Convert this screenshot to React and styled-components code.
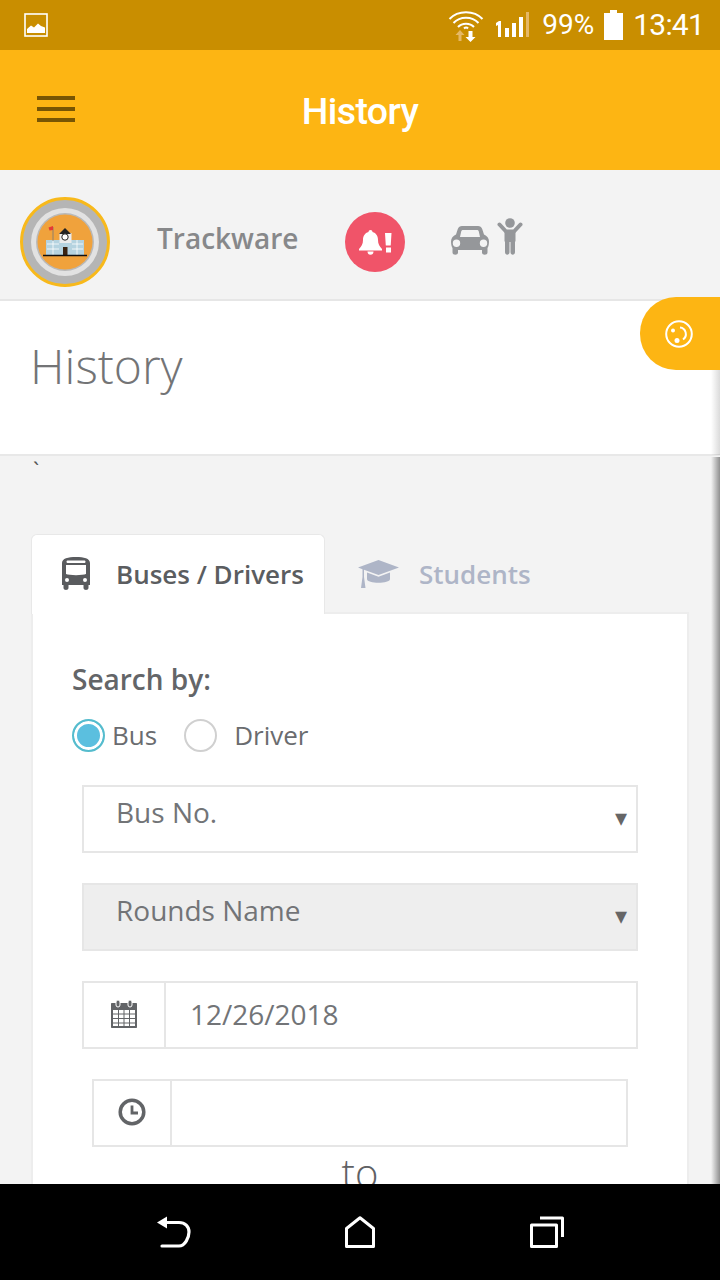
import React from 'react';
import styled, { createGlobalStyle } from 'styled-components';

const Global = createGlobalStyle`
  html, body { margin: 0; padding: 0; background: #000; }
  * { box-sizing: border-box; }
`;

const Screen = styled.div`
  width: 720px;
  height: 1280px;
  display: flex;
  flex-direction: column;
  overflow: hidden;
  position: relative;
  font-family: "Open Sans", sans-serif;
  background: #f3f3f3;
`;

const StatusBar = styled.div`
  height: 50px;
  flex: none;
  background: #c98e00;
  display: flex;
  align-items: center;
  padding: 0 16px 0 24px;
  color: #fff;
  font-family: Roboto, sans-serif;
`;

const StatusRight = styled.div`
  margin-left: auto;
  display: flex;
  align-items: center;
`;

const StatusSpacer = styled.span`
  width: ${p => p.$w}px;
`;

const StatusText = styled.span`
  font-size: ${p => p.$size}px;
  margin-left: ${p => p.$gap}px;
  letter-spacing: ${p => p.$spacing || 0}px;
  line-height: 50px;
`;

const AppBar = styled.div`
  height: 120px;
  flex: none;
  background: #fdb513;
  display: grid;
  grid-template-columns: 1fr;
  align-items: center;
  justify-items: center;
  position: relative;
`;

const Burger = styled.div`
  position: absolute;
  left: 37px;
  top: 46px;
  width: 38px;
  height: 26px;
  display: flex;
  flex-direction: column;
  justify-content: space-between;
  span { height: 4px; background: #785503; display: block; }
`;

const AppTitle = styled.div`
  color: #fff;
  font-family: Roboto, sans-serif;
  font-weight: 500;
  font-size: 37.5px;
  letter-spacing: -0.6px;
  transform: translateY(1px);
`;

const TopRow = styled.div`
  height: 131px;
  flex: none;
  display: flex;
  align-items: flex-start;
  padding: 27px 0 0 20px;
  border-bottom: 2px solid #e6e6e6;
`;

const OrgName = styled.div`
  margin-left: 47px;
  width: 188px;
  font-size: 28px;
  font-weight: 600;
  color: #87888a;
  line-height: 30px;
  margin-top: 26px;
`;

const AlertBadge = styled.div`
  width: 60px;
  height: 60px;
  margin-top: 15px;
  border-radius: 50%;
  background: #f05469;
  display: flex;
  align-items: center;
  justify-content: center;
`;

const PeopleIcons = styled.div`
  margin-left: 46px;
  margin-top: 21px;
  display: flex;
  align-items: flex-end;
  gap: 8px;
`;

const TitleBand = styled.div`
  height: 155px;
  flex: none;
  background: #fff;
  border-bottom: 2px solid #e8e8e8;
  padding: 34px 0 0 30px;
  font-size: 48px;
  font-weight: 300;
  color: #737476;
  line-height: 62px;
`;

const Float = styled.div`
  position: absolute;
  right: 0;
  top: 297px;
  width: 80px;
  height: 73px;
  border-radius: 36px 0 0 36px;
  background: #fdb513;
  display: flex;
  align-items: center;
  padding-left: 24px;
  z-index: 2;
`;

// scrollbar shadow along the right edge of the page
const EdgeShadow = styled.div`
  position: absolute;
  right: 0;
  top: ${p => p.$top}px;
  bottom: ${p => p.$bottom}px;
  width: 9px;
  background: linear-gradient(to right, rgba(120, 120, 120, 0), rgba(110, 110, 110, ${p => p.$alpha}));
`;

const Content = styled.div`
  flex: 1;
  min-height: 0;
  position: relative;
  padding: 78px 31px 0;
  overflow: hidden;
`;

const Tick = styled.div`
  position: absolute;
  left: 33px;
  top: 2px;
  font-size: 22px;
  line-height: 22px;
  color: #555;
`;

const Tabs = styled.div`
  display: flex;
  height: 80px;
`;

const Tab = styled.div`
  height: 80px;
  display: flex;
  align-items: center;
  font-size: 26px;
  font-weight: 600;
  line-height: 78px;
  border-radius: 6px 6px 0 0;
  padding: ${p => p.$active ? '0 20px 2px 30px' : '0 0 0 33px'};
  color: ${p => p.$active ? '#5b5d60' : '#aeb5c7'};
  background: ${p => p.$active ? '#fff' : 'transparent'};
  border: ${p => p.$active ? '1px solid #e8e8e8' : 'none'};
  border-bottom: none;
  position: relative;
  z-index: 1;
  svg { margin-right: ${p => p.$active ? 26 : 20}px; flex: none; }
`;

const Panel = styled.div`
  margin-top: -2px;
  background: #fff;
  border: 2px solid #ededed;
  height: 640px;
  padding: 46px 49px 0;
`;

const SearchLabel = styled.div`
  font-size: 28px;
  font-weight: 600;
  color: #636568;
  line-height: 38px;
  margin-left: -10px;
`;

const RadioRow = styled.div`
  display: flex;
  align-items: center;
  margin: 20px 0 0 -10px;
  height: 34px;
  color: #6a6c6f;
  font-size: 26px;
`;

const Radio = styled.span`
  width: 33px;
  height: 33px;
  border-radius: 50%;
  flex: none;
  background: ${p => p.$on ? '#5bbfdf' : '#fff'};
  border: 2px solid ${p => p.$on ? '#55bccd' : '#d0d0d0'};
  box-shadow: ${p => p.$on ? 'inset 0 0 0 3px #fff' : 'none'};
`;

const RadioText = styled.span`
  margin-left: ${p => p.$gap}px;
  margin-right: ${p => p.$after}px;
`;

const Select = styled.div`
  height: 68px;
  margin-top: ${p => p.$top}px;
  border: 2px solid #e6e6e6;
  background: ${p => p.$disabled ? '#eeeeee' : '#fff'};
  font-size: 28px;
  color: #727477;
  padding: 6px 0 0 32px;
  line-height: 38px;
  position: relative;
  &::after {
    content: "▾";
    position: absolute;
    right: 9px;
    top: 12px;
    font-family: "DejaVu Sans", sans-serif;
    font-size: 24px;
    color: #666;
  }
`;

const InputGroup = styled.div`
  height: 68px;
  margin: ${p => p.$top}px ${p => p.$inset}px 0;
  border: 2px solid #e6e6e6;
  display: flex;
`;

const Addon = styled.div`
  width: ${p => p.$w}px;
  flex: none;
  border-right: 2px solid #e6e6e6;
  display: flex;
  align-items: center;
  justify-content: center;
  padding-bottom: 2px;
`;

const InputValue = styled.div`
  padding-left: 24px;
  font-size: 28px;
  color: #727477;
  line-height: 62px;
`;

const ToLabel = styled.div`
  text-align: center;
  font-size: 40px;
  font-weight: 300;
  color: #5f6164;
  line-height: 50px;
  margin-top: 1px;
`;

const NavBar = styled.div`
  height: 96px;
  flex: none;
  background: #000;
  position: relative;
  z-index: 3;
  display: grid;
  grid-template-columns: repeat(3, 30px);
  justify-content: center;
  column-gap: 156px;
  align-items: center;
  padding-right: 1px;
`;

const NavIcon = styled.svg`
  margin-left: ${p => p.$shift || 0}px;
`;

const ImageIcon = () => (
  <svg width="24" height="24" viewBox="0 0 24 24">
    <rect x="1" y="1" width="22" height="22" fill="none" stroke="#fff" strokeWidth="1.6" />
    <path d="M3 20v-4l4-3.5 3 2 4-4 3 2.5 4 1.500V20z" fill="#fff" />
  </svg>
);

const WifiIcon = () => (
  <svg width="36" height="34" viewBox="0 0 36 34" fill="none">
    <path d="M1.500 11C10 2 26 2 34.500 11M5.500 15C12 8 24 8 30.500 15M10 19C14 14.500 22 14.500 26 19" stroke="#fff" strokeWidth="2" />
    <path d="M16 20.500c1.300-1.200 3-1.200 4 0" stroke="#fff" strokeWidth="2" />
    <path d="M12 22l-4.500 5h3v6h3v-6h3z" fill="#e5b866" />
    <path d="M20.500 23v6h-3l5 5 5-5h-3v-6z" fill="#fff" />
  </svg>
);

const SignalIcon = () => (
  <svg width="37" height="28" viewBox="0 0 37 28">
    <path d="M3 12l3-2h2v16H5V14l-2 1z" fill="#fff" />
    <rect x="12" y="17" width="4" height="9" fill="#fff" />
    <rect x="19" y="12" width="4" height="14" fill="#fff" />
    <rect x="26" y="6" width="4" height="20" fill="#fff" />
    <rect x="33" y="1" width="3" height="25" fill="#e5b866" />
  </svg>
);

const BatteryIcon = () => (
  <svg width="19" height="30" viewBox="0 0 19 30">
    <path d="M6 0h7v3h6v27H0V3h6z" fill="#fff" />
  </svg>
);

const SchoolLogo = () => (
  <svg width="90" height="90" viewBox="0 0 90 90">
    <circle cx="45" cy="45" r="43.500" fill="#b5b5b5" stroke="#f8b91b" strokeWidth="3" />
    <circle cx="45" cy="45" r="34" fill="#e2e2e2" />
    <circle cx="45" cy="45" r="29" fill="#b9b9b9" />
    <circle cx="45" cy="45" r="27.500" fill="#f0a23c" />
    <rect x="26" y="43" width="38" height="15" fill="#b5d3e0" />
    <rect x="39.500" y="36" width="12" height="10" fill="#ececec" />
    <path d="M39 37l6-6 6 6z" fill="#222" />
    <circle cx="45" cy="40" r="3.200" fill="#fff" stroke="#222" strokeWidth="1" />
    <path d="M27 47h12M27 52h12M52 47h11M52 52h11M33 43v15M57 43v15" stroke="#fff" strokeWidth="0.800" />
    <rect x="43" y="50" width="4.500" height="8" fill="#3a2413" />
    <path d="M23 58.500h44" stroke="#111" strokeWidth="1.500" />
    <path d="M33 30v14" stroke="#777" strokeWidth="0.800" />
    <path d="M33 29l-4.500 1.500 1 3 3.500-.5z" fill="#e53935" />
  </svg>
);

const AlertIcon = () => (
  <svg width="33" height="25" viewBox="0 0 33 25" fill="#fff">
    <path d="M11.500 0c1.200 0 2 .8 2 2 3.700 1 5.500 4 5.500 8 0 4 1.500 6.500 4 9v1.500H0V19c2.500-2.500 4-5 4-9 0-4 1.800-7 5.500-8 0-1.200.8-2 2-2z" />
    <path d="M8.500 21.500h6c0 2-1.200 3.300-3 3.300s-3-1.300-3-3.300z" />
    <path d="M26 3h6.500l-.8 12.500h-4.900z" />
    <rect x="27" y="17.500" width="5" height="5" />
  </svg>
);

const CarIcon = () => (
  <svg width="38" height="29" viewBox="0 0 38 29" fill="#95979a">
    <path d="M11 0h16c2 0 3.500 1 4.200 3L33 8.500c3 1.500 5 3.500 5 7 0 2.500-.5 5-1.500 6.500v4.500c0 3-5.500 3-5.500 0V24H7v2.500c0 3-5.500 3-5.500 0V22C.5 20.500 0 18 0 15.500c0-3.500 2-5.500 5-7L6.800 3C7.500 1 9 0 11 0zm1 4c-1 0-1.500.5-1.800 1.500L9 11h20l-1.200-5.500C27.500 4.500 27 4 26 4zM5.500 13.500a3.700 3.700 0 100 7.400 3.700 3.700 0 000-7.400zm27 0a3.700 3.700 0 100 7.400 3.700 3.700 0 000-7.400z" fillRule="evenodd" />
  </svg>
);

const KidIcon = () => (
  <svg width="26" height="37" viewBox="0 0 26 37" fill="#95979a">
    <circle cx="13" cy="5" r="4.800" />
    <path d="M2.500 6.500L9 13.500h8l6.500-7" fill="none" stroke="#95979a" strokeWidth="4" strokeLinecap="round" strokeLinejoin="round" />
    <path d="M7.500 12h11v11.500h-.5V34c0 3.500-4.500 3.500-4.500 0V24h-1v10c0 3.500-4.500 3.500-4.500 0V23.500h-.5z" />
  </svg>
);

const PaletteIcon = () => (
  <svg width="30" height="30" viewBox="0 0 30 30" fill="none" stroke="#fff">
    <circle cx="15" cy="15" r="12.800" strokeWidth="2" />
    <path d="M16 8.500C22 9 24 17 19 20.500" strokeWidth="2" />
    <circle cx="9" cy="11.500" r="2" fill="#fff" stroke="none" />
    <circle cx="13" cy="21.500" r="2.500" fill="#fff" stroke="none" />
  </svg>
);

const BusIcon = () => (
  <svg width="28" height="33" viewBox="0 0 28 33" fill="#595b5e">
    <path d="M14 0c8 0 14 1.500 14 6v22h-1.500v3c0 2.500-5 2.500-5 0v-3h-15v3c0 2.500-5 2.500-5 0v-3H0V6c0-4.500 6-6 14-6zM6 3.500c-1 0-1.500.5-1.500 1.200s.5 1.300 1.500 1.300h16c1 0 1.500-.5 1.500-1.300S23 3.500 22 3.500zM4 8v9c3 1.500 17 1.500 20 0V8zM5 21a2 2 0 100 4 2 2 0 000-4zm18 0a2 2 0 100 4 2 2 0 000-4z" fillRule="evenodd" />
  </svg>
);

const CapIcon = () => (
  <svg width="41" height="29" viewBox="0 0 41 29" fill="#aeb5c7">
    <path d="M20.500 0L41 7.500 20.500 15 6 9.800V17l1.500 11H3l1.500-11V9.200L0 7.500z" />
    <path d="M9 12.500l11.500 4.200L32 12.500V19c0 5-23 5-23 0z" />
  </svg>
);

const CalendarIcon = () => (
  <svg width="26" height="28" viewBox="0 0 26 28">
    <path d="M1 3h24c.6 0 1 .4 1 1v23c0 .6-.4 1-1 1H1c-.6 0-1-.4-1-1V4c0-.6.4-1 1-1z" fill="#626467" />
    <path d="M2 10h5v3.500H2zM8 10h4.500v3.500H8zM13.500 10H18v3.500h-4.500zM19 10h5v3.500h-5zM2 14.500h5V18H2zM8 14.500h4.500V18H8zM13.500 14.500H18V18h-4.500zM19 14.500h5V18h-5zM2 19h5v3.500H2zM8 19h4.500v3.500H8zM13.500 19H18v3.500h-4.500zM19 19h5v3.500h-5zM2 23.500h5V26H2zM8 23.500h4.500V26H8zM13.500 23.500H18V26h-4.500zM19 23.500h5V26h-5z" fill="#fff" />
    <rect x="5" y="0" width="4" height="7" rx="2" fill="#626467" stroke="#fff" strokeWidth="1" />
    <rect x="17" y="0" width="4" height="7" rx="2" fill="#626467" stroke="#fff" strokeWidth="1" />
  </svg>
);

const ClockIcon = () => (
  <svg width="28" height="28" viewBox="0 0 28 28" fill="none" stroke="#626467" strokeWidth="3.500">
    <circle cx="14" cy="14" r="11.800" />
    <path d="M14 7.500v7.500h6" strokeWidth="2.800" />
  </svg>
);

const BackIcon = () => (
  <NavIcon $shift={-2} width="34" height="32" viewBox="0 0 34 32" fill="none">
    <path d="M5 6.500h17c6 0 10 4 10 9.500s-4 14-10 14H5" stroke="#fff" strokeWidth="3.200" strokeLinecap="round" />
    <path d="M0 6.500L10 .5v12z" fill="#fff" />
  </NavIcon>
);

const HomeIcon = () => (
  <NavIcon width="30" height="32" viewBox="0 0 30 32" fill="none">
    <path d="M1.500 30.500V12.500L15 1.800l13.500 10.700v18z" stroke="#fff" strokeWidth="3" strokeLinejoin="round" />
  </NavIcon>
);

const RecentsIcon = () => (
  <NavIcon $shift={-1} width="34" height="32" viewBox="0 0 34 32" fill="none" stroke="#fff" strokeWidth="3" strokeLinejoin="round">
    <rect x="1.500" y="9" width="25" height="21.500" />
    <path d="M10 2h22.500v19" />
  </NavIcon>
);

export default function App() {
  return (
    <>
      <Global />
      <Screen>
        <StatusBar>
          <ImageIcon />
          <StatusRight>
            <WifiIcon />
            <StatusSpacer $w={9} />
            <SignalIcon />
            <StatusText $size={28} $gap={12}>99%</StatusText>
            <StatusSpacer $w={10} />
            <BatteryIcon />
            <StatusText $size={30} $gap={10} $spacing={-0.8}>13:41</StatusText>
          </StatusRight>
        </StatusBar>
        <AppBar>
          <Burger><span /><span /><span /></Burger>
          <AppTitle>History</AppTitle>
        </AppBar>
        <TopRow>
          <SchoolLogo />
          <OrgName>Trackware</OrgName>
          <AlertBadge><AlertIcon /></AlertBadge>
          <PeopleIcons><CarIcon /><KidIcon /></PeopleIcons>
        </TopRow>
        <TitleBand>History</TitleBand>
        <Float><PaletteIcon /></Float>
        <EdgeShadow $top={370} $bottom={825} $alpha={0.25} />
        <EdgeShadow $top={457} $bottom={96} $alpha={0.75} />
        <Content>
          <Tick>`</Tick>
          <Tabs>
            <Tab $active><BusIcon />Buses / Drivers</Tab>
            <Tab><CapIcon />Students</Tab>
          </Tabs>
          <Panel>
            <SearchLabel>Search by:</SearchLabel>
            <RadioRow>
              <Radio $on />
              <RadioText $gap={7} $after={27}>Bus</RadioText>
              <Radio />
              <RadioText $gap={17} $after={0}>Driver</RadioText>
            </RadioRow>
            <Select $top={33}>Bus No.</Select>
            <Select $top={30} $disabled>Rounds Name</Select>
            <InputGroup $top={30} $inset={0}>
              <Addon $w={82}><CalendarIcon /></Addon>
              <InputValue>12/26/2018</InputValue>
            </InputGroup>
            <InputGroup $top={30} $inset={10}>
              <Addon $w={78}><ClockIcon /></Addon>
            </InputGroup>
            <ToLabel>to</ToLabel>
          </Panel>
        </Content>
        <NavBar>
          <BackIcon />
          <HomeIcon />
          <RecentsIcon />
        </NavBar>
      </Screen>
    </>
  );
}
